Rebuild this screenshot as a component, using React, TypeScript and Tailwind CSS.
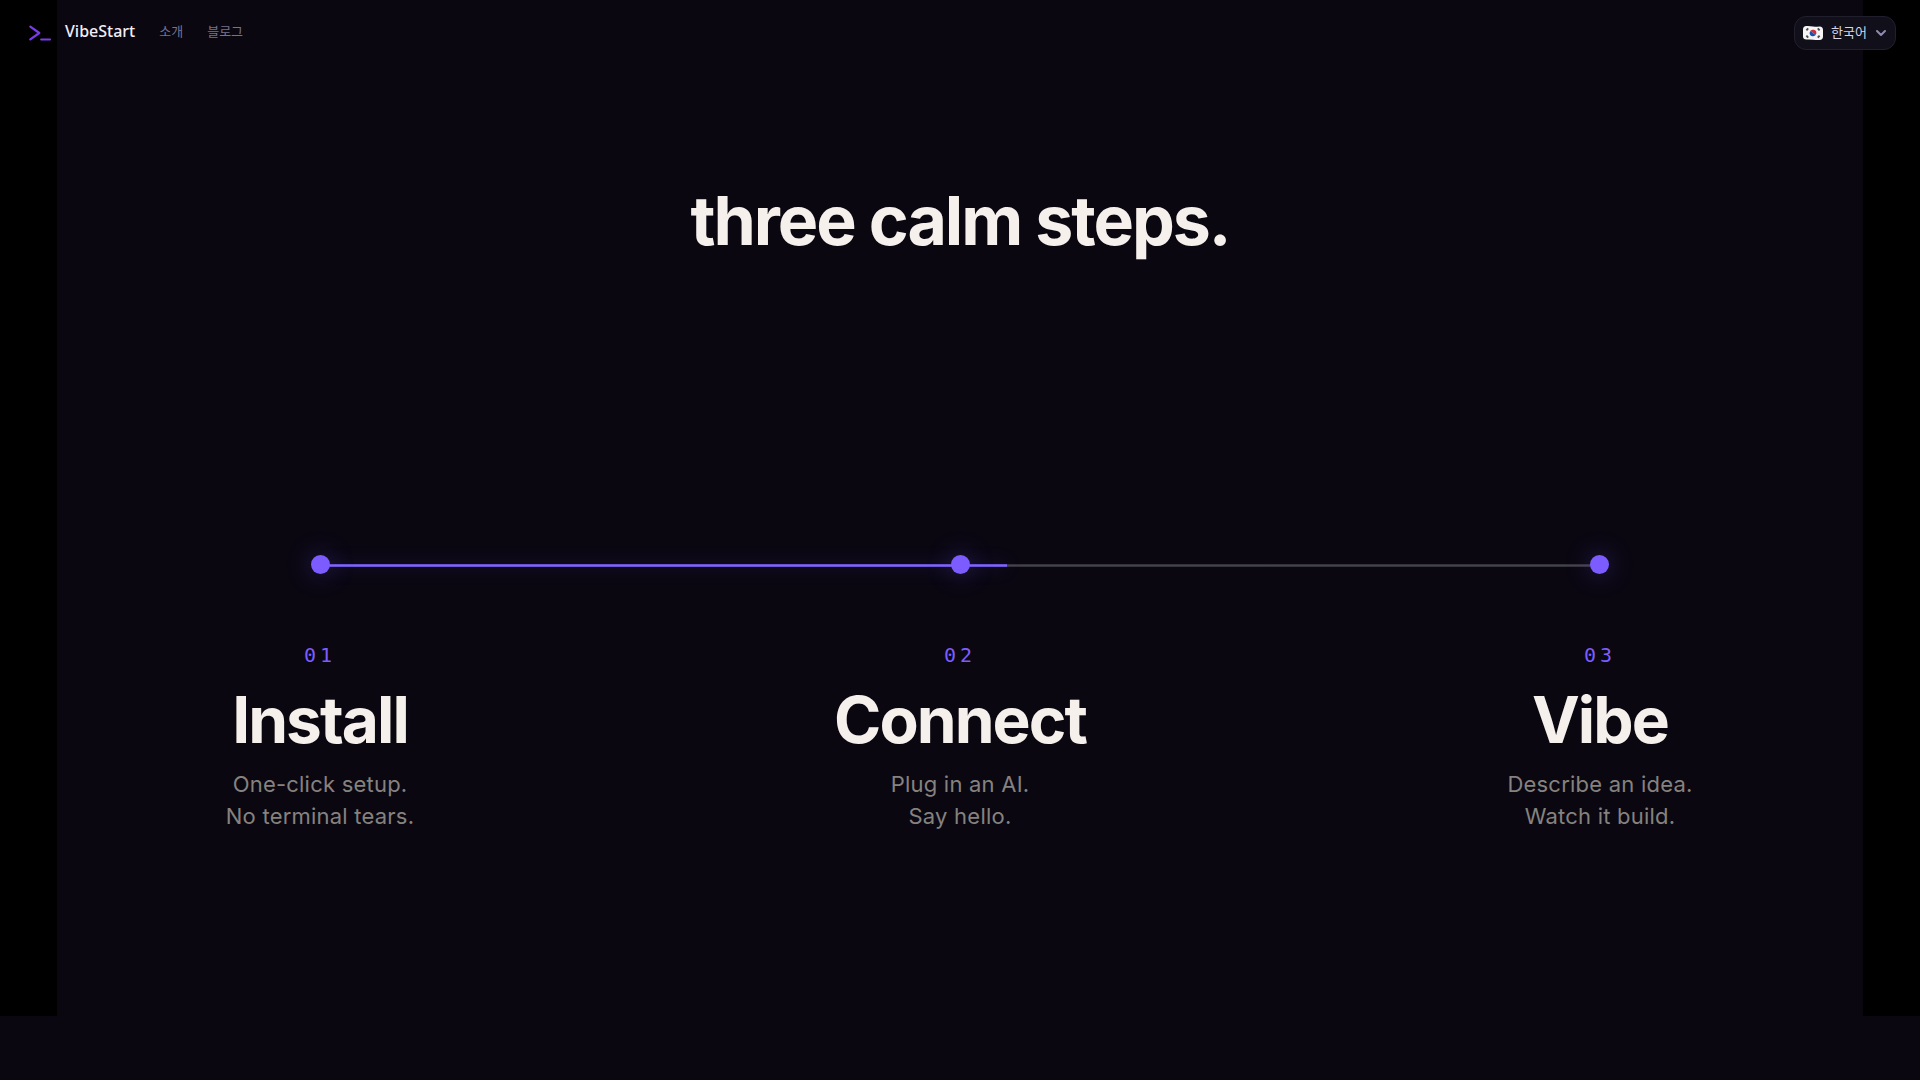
import { useState } from 'react'
import { ChevronDown } from 'lucide-react'

type Step = {
  number: string
  title: string
  lines: string[]
}

const steps: Step[] = [
  { number: '01', title: 'Install', lines: ['One-click setup.', 'No terminal tears.'] },
  { number: '02', title: 'Connect', lines: ['Plug in an AI.', 'Say hello.'] },
  { number: '03', title: 'Vibe', lines: ['Describe an idea.', 'Watch it build.'] },
]

function Logo() {
  return (
    <svg viewBox="0 0 28 24" fill="none" stroke="#7c3aed" strokeWidth="2.2" strokeLinecap="round" strokeLinejoin="round" className="h-6 w-7" aria-hidden="true">
      <path d="M6.3 5.6 15.3 12 6.3 18.4M17.2 18.5H26" />
    </svg>
  )
}

function KoreaFlag() {
  return (
    <svg viewBox="0 0 20 16" className="h-4 w-5" aria-hidden="true">
      <path d="M0 4.6Q0 1.2 3.4 1.1Q7 1 10 1.4T16.6 1.6Q20 1.7 20 5V11.6Q20 14.9 16.6 15Q13 15.1 10 14.7T3.4 14.5Q0 14.4 0 11.4Z" fill="#f5f5f5" />
      <path d="M6.7 7.2A3.4 3.4 0 0 1 13.3 8.8Q11.6 10.2 10 8T6.7 7.2Z" fill="#d22f3d" />
      <path d="M6.7 7.2Q8.4 5.8 10 8T13.3 8.8A3.4 3.4 0 0 1 6.7 7.2Z" fill="#1d50a8" />
      <g stroke="#4a4a4a" strokeWidth="1.8">
        <path d="M3.4 5.4 5.2 3.3M14.8 3.3 16.6 5.4M3.4 10.6 5.2 12.7M14.8 12.7 16.6 10.6" />
      </g>
    </svg>
  )
}

function Header() {
  const [open, setOpen] = useState(false)

  return (
    <header className="absolute inset-x-0 top-0 z-10 flex h-[66px] items-center justify-between px-6 font-['Noto_Sans_CJK_KR',sans-serif]">
      <div className="flex items-center gap-6">
        <a href="#" className="flex items-center gap-[13px] text-base font-medium text-[#f0eef8]">
          <Logo />
          <span className="pb-1 font-['Noto_Sans',sans-serif]">VibeStart</span>
        </a>
        <nav className="flex items-center gap-6 pb-1 text-[13px] text-[#77738f]">
          <a href="#about">소개</a>
          <a href="#blog">블로그</a>
        </nav>
      </div>
      <button
        type="button"
        aria-expanded={open}
        onClick={() => setOpen(!open)}
        className="flex h-[34px] items-center gap-2 rounded-xl border border-[#211f2c] bg-[#110f1a] pr-1.5 pl-2 text-[13px] text-[#d8d5e6]"
      >
        <KoreaFlag />
        <span className="pb-0.5">한국어</span>
        <ChevronDown className="-ml-0.5 size-4 text-[#8f8ab0]" strokeWidth={3} />
      </button>
    </header>
  )
}

function Timeline() {
  return (
    <div className="relative mx-[254px] flex h-[19px] items-center justify-between">
      <div className="absolute inset-x-[10px] top-[9px] h-[3px] bg-linear-to-b from-[#2b2932] via-[#45424c] to-[#2b2932]">
        <div className="h-full w-[53.7%] bg-linear-to-b from-[#5f49c4] via-[#8066f6] to-[#5f49c4] shadow-[0_0_18px_rgba(124,92,255,0.3)]" />
      </div>
      {steps.map((step) => (
        <span key={step.number} className="relative size-[19px] rounded-full bg-[#7c5cff] shadow-[0_0_24px_rgba(124,92,255,0.35)]" />
      ))}
    </div>
  )
}

export default function App() {
  return (
    <div className="relative min-h-screen bg-[#0a0711] font-[Inter,sans-serif]">
      <Header />
      <main className="bg-black">
        <section className="mx-auto flex aspect-video w-[94.06%] flex-col bg-[#0a0711] pt-[178px]">
          <h1 className="text-center text-[68px] leading-[84px] font-bold tracking-[-0.03em] text-[#f5f0eb]">three calm steps.</h1>
          <div className="mt-[293px]">
            <Timeline />
          </div>
          <ol className="mx-[123px] mt-16 flex justify-between text-center">
            {steps.map((step) => (
              <li key={step.number} className="w-[280px]">
                <p className="font-['DejaVu_Sans_Mono',monospace] text-[20px] leading-[34px] tracking-[0.2em] text-[#7c5cff]">{step.number}</p>
                <h2 className="mt-2 text-[64px] leading-[80px] font-bold tracking-[-0.03em] text-[#f5f0eb]">{step.title}</h2>
                <p className="mt-2 text-[22px] leading-[32px] tracking-[0.01em] text-[#85827f]">
                  {step.lines.map((line) => (
                    <span key={line} className="block">
                      {line}
                    </span>
                  ))}
                </p>
              </li>
            ))}
          </ol>
        </section>
      </main>
    </div>
  )
}
